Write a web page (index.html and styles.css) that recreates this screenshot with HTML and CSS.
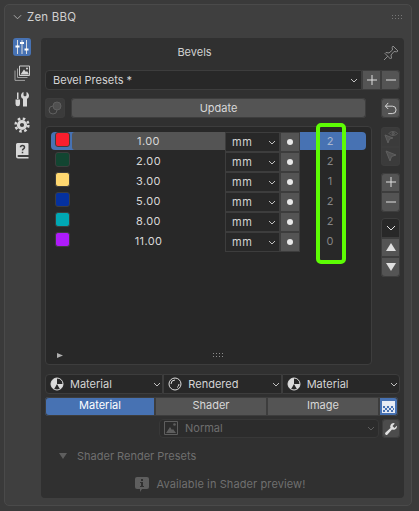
FILE: index.html
```html
<!DOCTYPE html>
<html lang="en">
<head>
<meta charset="utf-8">
<title>Zen BBQ</title>
<link rel="stylesheet" href="styles.css">
</head>
<body>
<div class="panel">
  <header class="panel-head">
    <svg class="chev-head" viewBox="0 0 10 6"><path d="M1 1l4 4 4-4"/></svg>
    <span class="panel-title">Zen BBQ</span>
    <svg class="grip" viewBox="0 0 11 5"><path d="M0 0h1v1H0zM3 0h1v1H3zM6 0h1v1H6zM9 0h1v1H9zM0 3h1v1H0zM3 3h1v1H3zM6 3h1v1H6zM9 3h1v1H9z"/></svg>
  </header>
  <div class="panel-body">
    <nav class="tabs-side">
      <button class="side-tab active"><svg viewBox="0 0 16 16"><path class="ln" d="M3.500 1v14M8 1v14M12.500 1v14"/><path class="fl" d="M1.500 6.500h4v2h-4zM6 3h4v2H6zM10.500 9.500h4v2h-4z"/></svg></button>
      <button class="side-tab"><svg viewBox="0 0 16 16"><path class="ol" d="M5.500 1h10v9.500h-10z"/><path class="ol dim" d="M3.500 3.500v9h10M1 5.500v9.900h10"/><path class="fl" d="M6.500 9.500l3.500-5 2 2.500 1-1 2 3.500z"/><circle class="fl" cx="13" cy="3.500" r="1"/></svg></button>
      <button class="side-tab"><svg viewBox="0 0 16 16"><path class="fl" d="M1.500 8.500h4.500v4.500a2.250 2.250 0 0 1-4.500 0zM3 1.500h1.500V8H3z"/><path class="fl" d="M9.500 1v3.500l1.500 1 1.500-1V1c1.500.5 2.500 2 2.500 3.500S14.500 7 13 7.800V15.500h-4V7.800C7.500 7 7 6 7 4.500S8 1.500 9.500 1z"/></svg></button>
      <button class="side-tab"><svg class="gear" viewBox="0 0 16 16"><circle class="g-ring" cx="8" cy="8" r="3.600"/><circle class="g-teeth" cx="8" cy="8" r="6.400"/></svg></button>
      <button class="side-tab"><svg viewBox="0 0 16 16"><path class="fl" d="M3.500 0H13.500a1 1 0 0 1 1 1V12H4.500a1 1 0 0 0 0 2H14.500v1.500H4a2 2 0 0 1-2-2V1.500A1.500 1.500 0 0 1 3.500 0z"/><path class="q" d="M6.500 4.200C6.500 1.800 10.500 1.800 10.500 4.200c0 1.800-2 1.600-2 3.300M8.500 8.800v1.500"/></svg></button>
    </nav>

    <main class="sheet">
      <div class="sheet-title">
        <span>Bevels</span>
        <svg class="pin" viewBox="0 0 16 16"><path d="M10 1l5 5-1.500 .8L11 6.500 8 10l.5 3L7.500 14l-5.500-5.500 1-1 3 .5 3.500-3-.3-2.500zM4.800 11.200L1 15"/></svg>
      </div>

      <div class="row-preset">
        <div class="select preset-select"><span>Bevel Presets *</span><svg class="chev" viewBox="0 0 8 5"><path d="M1 1l3 3 3-3"/></svg></div>
        <div class="btn-join">
          <button class="btn sq"><svg viewBox="0 0 10 10"><path d="M5 0v10M0 5h10"/></svg></button>
          <button class="btn sq"><svg viewBox="0 0 10 10"><path d="M0 5h10"/></svg></button>
        </div>
      </div>

      <div class="row-update">
        <button class="btn sq dim-box wide"><svg viewBox="0 0 14 14"><circle cx="5" cy="9" r="4"/><circle cx="9" cy="5" r="4" class="dim-fill"/></svg></button>
        <button class="btn update">Update</button>
        <button class="btn sq undo"><svg viewBox="0 0 14 14"><path d="M4.500 1L1.500 4.500l3 3M1.500 4.500H9a4 4 0 0 1 0 8H4.500"/></svg></button>
      </div>

      <div class="list-wrap">
        <section class="list">
          <div class="list-rows">
            <div class="item selected">
              <span class="swatch" style="background:#fa1e2d"></span>
              <span class="value hover">1.00</span>
              <div class="unit"><span>mm</span><svg class="chev" viewBox="0 0 8 5"><path d="M1 1l3 3 3-3"/></svg></div>
              <span class="dot-btn"><i></i></span>
              <span class="count">2</span>
            </div>
            <div class="item">
              <span class="swatch" style="background:#124531"></span>
              <span class="value">2.00</span>
              <div class="unit"><span>mm</span><svg class="chev" viewBox="0 0 8 5"><path d="M1 1l3 3 3-3"/></svg></div>
              <span class="dot-btn"><i></i></span>
              <span class="count">2</span>
            </div>
            <div class="item">
              <span class="swatch" style="background:#ffd870"></span>
              <span class="value">3.00</span>
              <div class="unit"><span>mm</span><svg class="chev" viewBox="0 0 8 5"><path d="M1 1l3 3 3-3"/></svg></div>
              <span class="dot-btn"><i></i></span>
              <span class="count">1</span>
            </div>
            <div class="item">
              <span class="swatch" style="background:#05319f"></span>
              <span class="value">5.00</span>
              <div class="unit"><span>mm</span><svg class="chev" viewBox="0 0 8 5"><path d="M1 1l3 3 3-3"/></svg></div>
              <span class="dot-btn"><i></i></span>
              <span class="count">2</span>
            </div>
            <div class="item">
              <span class="swatch" style="background:#00a8b4"></span>
              <span class="value">8.00</span>
              <div class="unit"><span>mm</span><svg class="chev" viewBox="0 0 8 5"><path d="M1 1l3 3 3-3"/></svg></div>
              <span class="dot-btn"><i></i></span>
              <span class="count">2</span>
            </div>
            <div class="item">
              <span class="swatch" style="background:#ae1bfa"></span>
              <span class="value">11.00</span>
              <div class="unit"><span>mm</span><svg class="chev" viewBox="0 0 8 5"><path d="M1 1l3 3 3-3"/></svg></div>
              <span class="dot-btn"><i></i></span>
              <span class="count">0</span>
            </div>
          </div>
          <div class="list-foot">
            <svg class="tri" viewBox="0 0 6 5"><path d="M0 0l6 2.500-6 2.500z"/></svg>
            <svg class="grip foot-grip" viewBox="0 0 11 5"><path d="M0 0h1v1H0zM3 0h1v1H3zM6 0h1v1H6zM9 0h1v1H9zM0 3h1v1H0zM3 3h1v1H3zM6 3h1v1H6zM9 3h1v1H9z"/></svg>
          </div>
        </section>
        <aside class="list-tools">
          <div class="btn-stack">
            <button class="btn sq dim-box"><svg viewBox="0 0 14 14"><path class="dim-fill" d="M1 5l8 3-3.500 1L4 13z"/><path d="M5 3.500C6.500 1 11.500 1 13.500 3.500 11.500 6 6.500 6 5 3.500z"/><circle class="dim-fill" cx="9.200" cy="3.500" r="1.200"/></svg></button>
            <button class="btn sq dim-box"><svg viewBox="0 0 14 14"><path class="dim-fill" d="M2 2l10 4-4.500 1.500L6 12z"/></svg></button>
          </div>
          <div class="btn-stack">
            <button class="btn sq"><svg viewBox="0 0 10 10"><path d="M5 0v10M0 5h10"/></svg></button>
            <button class="btn sq"><svg viewBox="0 0 10 10"><path d="M0 5h10"/></svg></button>
          </div>
          <div class="btn-stack tall">
            <button class="btn sq dark"><svg viewBox="0 0 10 6"><path d="M1 1l4 4 4-4"/></svg></button>
            <button class="btn sq"><svg class="solid" viewBox="0 0 10 8"><path d="M5 0l5 8H0z"/></svg></button>
            <button class="btn sq"><svg class="solid" viewBox="0 0 10 8"><path d="M0 0h10L5 8z"/></svg></button>
          </div>
        </aside>
        <div class="highlight"></div>
      </div>

      <div class="row-shading">
        <div class="select shade"><svg class="ball" viewBox="0 0 14 14"><circle cx="7" cy="7" r="6"/><path class="ball-fill" d="M7 1a6 6 0 0 0-6 6c0 2.200 1.200 4.200 3 5.200L7 7z"/><path class="ball-fill" d="M13 7H7l3 5.200A6 6 0 0 0 13 7z"/></svg><span>Material</span><svg class="chev" viewBox="0 0 8 5"><path d="M1 1l3 3 3-3"/></svg></div>
        <div class="select shade"><svg class="ball" viewBox="0 0 14 14"><circle cx="7" cy="7" r="6"/><path d="M3 7a4 4 0 0 1 4-4M11 7a4 4 0 0 1-2 3.500"/></svg><span>Rendered</span><svg class="chev" viewBox="0 0 8 5"><path d="M1 1l3 3 3-3"/></svg></div>
        <div class="select shade"><svg class="ball" viewBox="0 0 14 14"><circle cx="7" cy="7" r="6"/><path class="ball-fill" d="M7 1a6 6 0 0 0-6 6c0 2.200 1.200 4.200 3 5.200L7 7z"/><path class="ball-fill" d="M13 7H7l3 5.200A6 6 0 0 0 13 7z"/></svg><span>Material</span><svg class="chev" viewBox="0 0 8 5"><path d="M1 1l3 3 3-3"/></svg></div>
      </div>

      <div class="row-tabs">
        <button class="tab on">Material</button>
        <button class="tab">Shader</button>
        <button class="tab">Image</button>
        <button class="checker" aria-label="Alpha"><span></span></button>
      </div>

      <div class="row-normal">
        <div class="select normal"><svg class="img-ic" viewBox="0 0 14 14"><path class="ol" d="M.5.5h13v13H.5z"/><path class="fl" d="M2 12l4-6 2 3 1-1 3 4z"/><circle class="fl" cx="10.500" cy="3.500" r="1.300"/></svg><span>Normal</span><svg class="chev" viewBox="0 0 8 5"><path d="M1 1l3 3 3-3"/></svg></div>
        <button class="btn sq wrench"><svg viewBox="0 0 14 14"><path d="M9.500 1a3.500 3.500 0 0 0-3 5L1.500 10.500a1.400 1.400 0 0 0 2 2L8 7.500a3.500 3.500 0 0 0 5-3l-.3-.8L10.500 6 8.500 4l2.300-2.500z"/></svg></button>
      </div>

      <div class="presets-head">
        <svg viewBox="0 0 8 6"><path d="M0 0h8L4 6z"/></svg>
        <span>Shader Render Presets</span>
      </div>

      <div class="notice">
        <svg viewBox="0 0 14 15"><path fill-rule="evenodd" d="M2 0h10a2 2 0 0 1 2 2v8a2 2 0 0 1-2 2H7l-2 3v-3H2a2 2 0 0 1-2-2V2a2 2 0 0 1 2-2zM6 2v2h2V2zM5 5v1h1v3H5v1h4V9H8V5z"/></svg>
        <span>Available in Shader preview!</span>
      </div>
    </main>
  </div>
</div>
</body>
</html>
```

FILE: styles.css
```css
* { box-sizing: border-box; }
html, body { margin: 0; height: 100%; }
body {
  background: #3a3a3a;
  font: 11px/20px Inter, "Noto Sans", sans-serif;
  color: #d9d9d9;
  overflow: hidden;
  padding: 4px 7px 5px 4px;
}
button { font: inherit; color: inherit; padding: 0; margin: 0; border: 0; }
svg { display: block; }

.panel {
  height: 502px;
  background: #3f3f3f;
  border: 1px solid #4a4a4a;
  border-radius: 5px;
  display: flex;
  flex-direction: column;
}
.panel-head {
  height: 33px;
  flex: none;
  display: flex;
  align-items: center;
  padding: 0 8px 9px 8px;
  gap: 5px;
}
.chev-head { width: 9px; height: 6px; fill: none; stroke: #b5b5b5; stroke-width: 1; }
.panel-title { flex: 1; font-size: 11.500px; color: #d0d0d0; letter-spacing: .2px; }
.grip { width: 11px; height: 5px; fill: #777; }

.panel-body { flex: 1; display: flex; padding-right: 7px; padding-bottom: 7px; }
.tabs-side {
  width: 34px;
  margin-right: 2px;
  flex: none;
  display: flex;
  flex-direction: column;
  align-items: center;
  gap: 8px;
}
.side-tab {
  width: 18px;
  height: 18px;
  border-radius: 3px;
  background: transparent;
  display: flex;
  align-items: center;
  justify-content: center;
}
.side-tab svg { width: 16px; height: 16px; }
.side-tab .ln { stroke: #dcdcdc; stroke-width: 1; fill: none; }
.side-tab .fl { fill: #d8d8d8; }
.side-tab .ol { fill: none; stroke: #d0d0d0; stroke-width: 1; }
.side-tab .ol.dim { stroke: #a0a0a0; }
.side-tab .q { fill: none; stroke: #3f3f3f; stroke-width: 1.500; }
.gear { fill: none; }
.g-ring { stroke: #d8d8d8; stroke-width: 3; }
.g-teeth { stroke: #d8d8d8; stroke-width: 2.500; stroke-dasharray: 2.513 2.513; }
.side-tab.active { background: #4772b3; }
.side-tab.active .fl { fill: #fff; }

.sheet {
  flex: 1;
  background: #303030;
  border-radius: 4px;
  padding: 0 4px 0 4px;
  display: flex;
  flex-direction: column;
}
.sheet-title {
  height: 32px;
  flex: none;
  display: flex;
  align-items: center;
  justify-content: center;
  padding: 0 56px 4px 0;
  color: #d0d0d0;
  position: relative;
}
.pin { position: absolute; right: 1px; top: 7px; width: 16px; height: 16px; fill: none; stroke: #8e8e8e; stroke-width: 1; }

.select {
  background: #282828;
  border: 1px solid #3d3d3d;
  display: flex;
  align-items: center;
  height: 20px;
  border-radius: 4px;
  color: #d4d4d4;
}
.chev { width: 8px; height: 5px; fill: none; stroke: #c0c0c0; stroke-width: 1; flex: none; margin-left: auto; }

.btn {
  background: #545454;
  border-radius: 4px;
  box-shadow: inset 0 0 0 1px #3d3d3d;
  color: #e2e2e2;
}
.btn.sq { width: 19px; height: 20px; display: flex; align-items: center; justify-content: center; flex: none; }
.btn.sq svg { width: 10px; height: 10px; fill: none; stroke: #e0e0e0; stroke-width: 1; }
.btn.sq svg.solid { fill: #e0e0e0; stroke: none; width: 10px; height: 8px; }

.row-preset { display: flex; height: 20px; flex: none; }
.preset-select { flex: 1; border-radius: 4px 0 0 4px; padding: 0 3px 0 7px; }
.btn-join { display: flex; }
.btn-join .btn { border-radius: 0; }
.btn-join .btn + .btn { border-radius: 0 4px 4px 0; }

.row-update { display: flex; height: 20px; margin-top: 8px; flex: none; }
.btn.sq.wide { width: 20px; }
.update { width: 295px; margin-left: 6px; color: #d8d8d8; }
.row-update .undo { margin-left: auto; }
.btn.sq.undo svg { width: 13px; height: 13px; }
.btn.sq.dim-box { background: #3b3b3b; }
.btn.sq.dim-box svg { width: 14px; height: 14px; stroke: #5f5f5f; stroke-width: 1; }
.btn.sq.dim-box .dim-fill { fill: #505050; stroke: #5f5f5f; }

.list-wrap { position: relative; display: flex; margin-top: 8px; flex: none; height: 239px; }
.list {
  width: 327px;
  height: 239px;
  background: #282828;
  border: 1px solid #3d3d3d;
  border-radius: 4px;
  padding: 5px 5px 0;
  display: flex;
  flex-direction: column;
}
.list-rows { flex: 1; display: flex; flex-direction: column; gap: 2px; }
.item { display: flex; align-items: flex-start; height: 18px; position: relative; line-height: 18px; flex: none; }
.item.selected { background: #4772b3; border-radius: 4px; }
.swatch {
  width: 15px;
  height: 15px;
  margin-left: 4px;
  border-radius: 3px;
  border: 1px solid #3d3d3d;
  flex: none;
}
.value {
  width: 153px;
  margin-left: 2px;
  height: 18px;
  text-align: center;
  letter-spacing: .4px;
  color: #d8d8d8;
  flex: none;
}
.value.hover { background: #545454; border-radius: 3px 0 0 3px; }
.unit {
  width: 55px;
  height: 20px;
  flex: none;
  background: #282828;
  border: 1px solid #3d3d3d;
  display: flex;
  align-items: center;
  padding: 0 3px 0 6px;
  letter-spacing: .7px;
  color: #d4d4d4;
}
.dot-btn {
  width: 20px;
  height: 20px;
  flex: none;
  background: #545454;
  border: 1px solid #3d3d3d;
  display: flex;
  align-items: center;
  justify-content: center;
}
.dot-btn i { width: 6px; height: 6px; border-radius: 50%; background: #e8e8e8; display: block; }
.count { width: 60px; text-align: center; color: #858585; flex: none; }
.selected .count { color: #a9b7cf; }

.list-foot { height: 18px; display: flex; align-items: center; position: relative; flex: none; }
.tri { width: 6px; height: 5px; fill: #b0b0b0; margin-left: 6px; }
.foot-grip { position: absolute; left: 162px; top: 7px; fill: #8e8e8e; }

.list-tools {
  margin-left: auto;
  width: 19px;
  display: flex;
  flex-direction: column;
  gap: 6.500px;
  padding-top: 1px;
}
.btn-stack { display: flex; flex-direction: column; }
.btn-stack .btn.sq { border-radius: 0; height: 19.500px; }
.btn-stack.tall .btn.sq { height: 19.670px; }
.btn-stack .btn.sq:first-child { border-radius: 4px 4px 0 0; }
.btn-stack .btn.sq:last-child { border-radius: 0 0 4px 4px; }
.btn.sq.dark { background: #282828; }

.highlight {
  position: absolute;
  left: 271px;
  top: -3px;
  width: 30px;
  height: 141px;
  border: 4px solid #5dfc04;
  border-radius: 5px;
}

.row-shading { display: flex; margin-top: 9px; height: 20px; flex: none; }
.shade { flex: 1; border-radius: 0; padding: 0 1px 0 4px; gap: 6px; }
.shade:first-child { border-radius: 4px 0 0 4px; }
.shade:last-child { border-radius: 0 4px 4px 0; }
.ball { width: 14px; height: 14px; fill: none; stroke: #dcdcdc; stroke-width: 1; flex: none; }
.ball-fill { fill: #dcdcdc; stroke: none; }

.row-tabs { display: flex; height: 19px; margin-top: 3px; flex: none; }
.tab {
  background: #545454;
  width: 112px;
  line-height: 17px;
  padding-bottom: 2px;
  color: #d8d8d8;
  box-shadow: inset 0 0 0 1px #3d3d3d;
}
.tab.on { background: #4772b3; width: 110px; color: #fff; border-radius: 4px 0 0 4px; }
.checker {
  width: 19px;
  background: #4772b3;
  border-radius: 0 4px 4px 0;
  display: flex;
  align-items: center;
  justify-content: center;
  box-shadow: inset 0 0 0 1px #3d3d3d;
}
.checker span {
  width: 13px;
  height: 12px;
  display: block;
  background-color: #4772b3;
  background-image:
    linear-gradient(#e8ecf4 4px, transparent 4px),
    conic-gradient(#dfe5f0 25%, transparent 0 50%, #dfe5f0 0 75%, transparent 0);
  background-size: 100% 100%, 4px 4px;
  border: 1px solid #e8ecf4;
}

.row-normal { display: flex; height: 19px; margin-top: 3px; flex: none; padding-left: 114px; gap: 3px; }
.normal { flex: 1; height: 19px; line-height: 17px; background: #2c2c2c; border-color: #383838; padding: 0 3px 1px 4px; gap: 7px; color: #6e6e6e; }
.normal .chev { stroke: #5e5e5e; }
.img-ic { width: 14px; height: 14px; }
.img-ic .ol { fill: none; stroke: #5e5e5e; }
.img-ic .fl { fill: #5e5e5e; }
.btn.sq.wrench { background: #4c4c4c; width: 18px; height: 19px; }
.btn.sq.wrench svg { width: 14px; height: 14px; fill: #e0e0e0; stroke: none; }

.presets-head {
  display: flex;
  align-items: center;
  height: 20px;
  margin-top: 8px;
  padding-left: 14px;
  gap: 10px;
  color: #6f6f6f;
  flex: none;
}
.presets-head svg { width: 8px; height: 6px; fill: #5e5e5e; }
.notice {
  display: flex;
  align-items: center;
  justify-content: center;
  gap: 8px;
  height: 20px;
  margin-top: 8px;
  padding-right: 5px;
  letter-spacing: .1px;
  color: #6f6f6f;
  flex: none;
}
.notice svg { width: 14px; height: 15px; fill: #5e5e5e; }
```
